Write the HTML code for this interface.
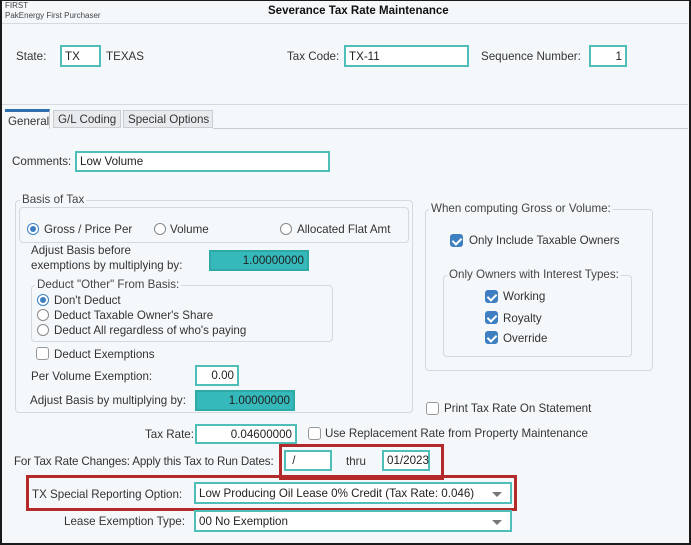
<!DOCTYPE html>
<html><head><style>
*{box-sizing:border-box;margin:0;padding:0}
body{width:691px;height:545px;overflow:hidden;background:#f4f8fb;font-family:"Liberation Sans",sans-serif;font-size:11.6px;color:#333;position:relative}
.a{position:absolute;white-space:nowrap}
.in{position:absolute;background:#fff;border:2px solid #4fbdb8;padding:0 3px;font-size:11.6px;color:#222;display:flex;align-items:center;white-space:nowrap}
.r{justify-content:flex-end}
.teal{background:#35b9bb;border-color:#2fa9a5}
.grp{position:absolute;border:1px solid #d3d9de;border-radius:4px}
.lg{position:absolute;background:#f4f8fb;padding:0 2px;color:#444;white-space:nowrap}
.rad{position:absolute;width:12px;height:12px;border:1px solid #888;border-radius:50%;background:#fff}
.rad.on{border-color:#3d7fc0}
.rad.on:after{content:"";position:absolute;left:2px;top:2px;width:6px;height:6px;border-radius:50%;background:#3d7fc0}
.cb{position:absolute;width:13px;height:13px;border:1px solid #999;border-radius:3px;background:#fff}
.cb.on{background:#3d7fc0;border-color:#3d7fc0}
.cb.on:after{content:"";position:absolute;left:3px;top:1px;width:4px;height:7px;border:solid #fff;border-width:0 2px 2px 0;transform:rotate(45deg)}
.red{position:absolute;border:3px solid #b42a2a}
.arr{position:absolute;right:8px;top:8px;width:0;height:0;border-left:5px solid transparent;border-right:5px solid transparent;border-top:5px solid #777}
</style></head><body>
<div class="a" style="left:0;top:0;width:691px;height:545px;border:2px solid #1a1a1a;border-top-width:1px"></div>
<div class="a" style="left:5px;top:1px;font-size:8px;color:#444">FIRST</div>
<div class="a" style="left:5px;top:11px;font-size:8px;color:#444">PakEnergy First Purchaser</div>
<div class="a" style="left:268px;top:5px;font-size:11.5px;font-weight:bold;color:#111">Severance Tax Rate Maintenance</div>
<div class="a" style="left:2px;top:23px;width:686px;height:1px;background:#d5dade"></div>
<div class="a" style="left:16px;top:50px">State:</div>
<div class="in" style="left:60px;top:45px;width:41px;height:22px">TX</div>
<div class="a" style="left:106px;top:50px">TEXAS</div>
<div class="a" style="left:287px;top:50px">Tax Code:</div>
<div class="in" style="left:344px;top:45px;width:125px;height:22px">TX-11</div>
<div class="a" style="left:481px;top:50px">Sequence Number:</div>
<div class="in r" style="left:589px;top:45px;width:38px;height:22px">1</div>
<div class="a" style="left:2px;top:104px;width:686px;height:1px;background:#d5dade"></div>
<div class="a" style="left:5px;top:109px;width:45px;height:20px;background:#f4f8fb;border-top:3px solid #2f6fb0;border-right:1px solid #ccc;padding:3px 0 0 3px">General</div>
<div class="a" style="left:53px;top:110px;width:68px;height:18px;background:#e8ebee;border:1px solid #c9cdd1;padding:2px 0 0 4px">G/L Coding</div>
<div class="a" style="left:123px;top:110px;width:90px;height:18px;background:#e8ebee;border:1px solid #c9cdd1;padding:2px 0 0 4px">Special Options</div>
<div class="a" style="left:213px;top:128px;width:475px;height:1px;background:#c9cdd1"></div>
<div class="a" style="left:12px;top:155px">Comments:</div>
<div class="in" style="left:75px;top:151px;width:255px;height:21px">Low Volume</div>

<div class="grp" style="left:15px;top:200px;width:398px;height:213px"></div>
<div class="lg" style="left:20px;top:193px">Basis of Tax</div>
<div class="grp" style="left:19px;top:207px;width:390px;height:36px"></div>
<div class="rad on" style="left:27px;top:223px"></div><div class="a" style="left:44px;top:223px">Gross / Price Per</div>
<div class="rad" style="left:154px;top:223px"></div><div class="a" style="left:170px;top:223px">Volume</div>
<div class="rad" style="left:280px;top:223px"></div><div class="a" style="left:297px;top:223px">Allocated Flat Amt</div>
<div class="a" style="left:31px;top:244px">Adjust Basis before</div>
<div class="a" style="left:31px;top:259px">exemptions by multiplying by:</div>
<div class="in r teal" style="left:209px;top:250px;width:100px;height:21px">1.00000000</div>
<div class="grp" style="left:31px;top:285px;width:302px;height:57px"></div>
<div class="lg" style="left:35px;top:278px">Deduct "Other" From Basis:</div>
<div class="rad on" style="left:37px;top:294px"></div><div class="a" style="left:54px;top:294px">Don't Deduct</div>
<div class="rad" style="left:37px;top:309px"></div><div class="a" style="left:54px;top:309px">Deduct Taxable Owner's Share</div>
<div class="rad" style="left:37px;top:324px"></div><div class="a" style="left:54px;top:324px">Deduct All regardless of who's paying</div>
<div class="cb" style="left:36px;top:347px"></div><div class="a" style="left:54px;top:348px">Deduct Exemptions</div>
<div class="a" style="left:31px;top:370px">Per Volume Exemption:</div>
<div class="in r" style="left:195px;top:365px;width:44px;height:21px">0.00</div>
<div class="a" style="left:30px;top:394px">Adjust Basis by multiplying by:</div>
<div class="in r teal" style="left:195px;top:390px;width:100px;height:21px">1.00000000</div>

<div class="grp" style="left:425px;top:209px;width:228px;height:162px"></div>
<div class="lg" style="left:429px;top:202px">When computing Gross or Volume:</div>
<div class="cb on" style="left:450px;top:234px"></div><div class="a" style="left:469px;top:234px">Only Include Taxable Owners</div>
<div class="grp" style="left:443px;top:275px;width:189px;height:82px"></div>
<div class="lg" style="left:447px;top:268px">Only Owners with Interest Types:</div>
<div class="cb on" style="left:485px;top:290px"></div><div class="a" style="left:503px;top:290px">Working</div>
<div class="cb on" style="left:485px;top:311px"></div><div class="a" style="left:503px;top:312px">Royalty</div>
<div class="cb on" style="left:485px;top:331px"></div><div class="a" style="left:503px;top:332px">Override</div>
<div class="cb" style="left:426px;top:402px"></div><div class="a" style="left:444px;top:402px">Print Tax Rate On Statement</div>

<div class="a" style="left:145px;top:428px">Tax Rate:</div>
<div class="in r" style="left:195px;top:424px;width:102px;height:20px">0.04600000</div>
<div class="cb" style="left:308px;top:427px"></div><div class="a" style="left:325px;top:427px">Use Replacement Rate from Property Maintenance</div>
<div class="red" style="left:279px;top:444px;width:165px;height:36px"></div>
<div class="a" style="left:14px;top:455px;letter-spacing:-0.15px">For Tax Rate Changes: Apply this Tax to Run Dates:</div>
<div class="in" style="left:284px;top:450px;width:48px;height:21px">&nbsp;/</div>
<div class="a" style="left:346px;top:455px">thru</div>
<div class="in" style="left:382px;top:450px;width:48px;height:21px">01/2023</div>
<div class="red" style="left:26px;top:475px;width:491px;height:36px"></div>
<div class="a" style="left:32px;top:488px">TX Special Reporting Option:</div>
<div class="in" style="left:194px;top:482px;width:318px;height:22px">Low Producing Oil Lease 0% Credit (Tax Rate: 0.046)<span class="arr"></span></div>
<div class="a" style="left:64px;top:515px">Lease Exemption Type:</div>
<div class="in" style="left:194px;top:510px;width:318px;height:22px">00 No Exemption<span class="arr"></span></div>
</body></html>
